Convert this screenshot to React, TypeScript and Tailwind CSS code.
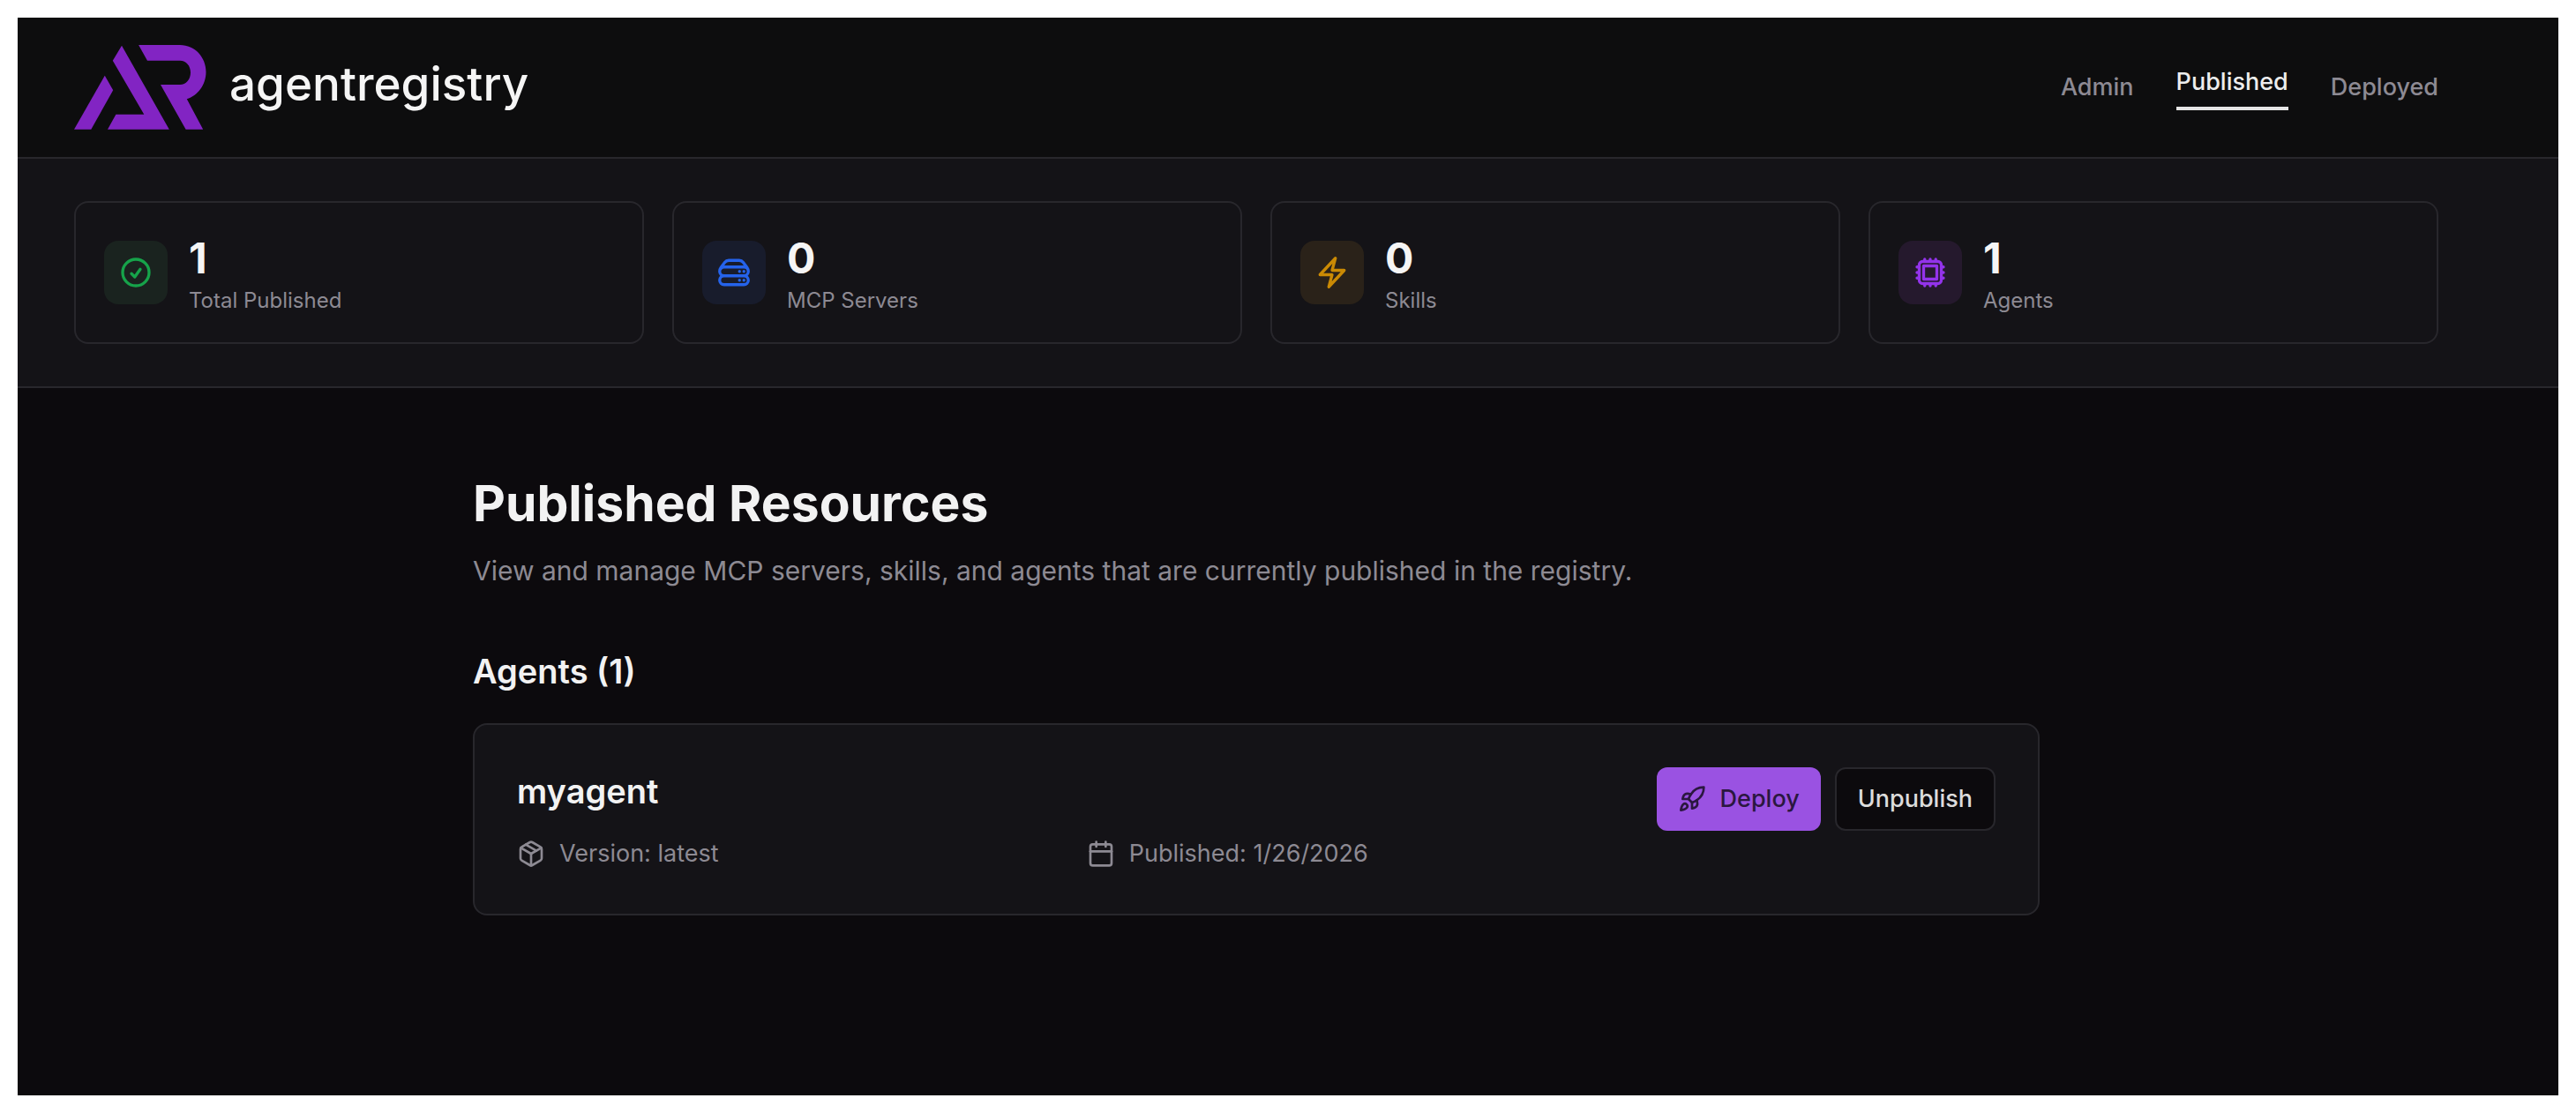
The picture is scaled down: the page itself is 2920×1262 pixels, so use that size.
import React from 'react';
import { Calendar, Package, Rocket } from 'lucide-react';
import {
    HiOutlineBolt,
    HiOutlineCheckCircle,
    HiOutlineCpuChip,
    HiOutlineServerStack,
} from 'react-icons/hi2';

const stats = [
    { label: 'Total Published', value: 1, icon: HiOutlineCheckCircle, style: 'bg-[#1a231f] text-[#16a34a]' },
    { label: 'MCP Servers', value: 0, icon: HiOutlineServerStack, style: 'bg-[#181c2c] text-[#2563eb]' },
    { label: 'Skills', value: 0, icon: HiOutlineBolt, style: 'bg-[#2a2219] text-[#ca8a04]' },
    { label: 'Agents', value: 1, icon: HiOutlineCpuChip, style: 'bg-[#25192d] text-[#9333ea]' },
];

const navItems = ['Admin', 'Published', 'Deployed'];

const agents = [{ name: 'myagent', version: 'latest', published: '1/26/2026' }];

const Logo: React.FC = () => (
    <svg width="150" height="96" viewBox="0 0 150 96" fill="#8224c3" aria-hidden="true">
        <path d="M34.8 34.7 44.2 51.3 19.3 95.7H0Z" />
        <path d="M54 .7 107.8 95.7H38L47.4 78.7H79.3L43.8 17.7Z" />
        <path d="M73.1 0H120C137 0 149.5 14 149.5 30.7C149.5 45 140 57.5 127.8 61.3L146.2 95.7H126.6L98 45H120C127 45 132 39 132 31.3C132 23.5 127 17.7 120 17.7H83Z" />
    </svg>
);

const Header: React.FC = () => (
    <header className="border-b-2 border-[#28272c] bg-[#0d0d0e]">
        <div className="mr-[72px] flex h-[158px] items-center justify-between px-16">
            <a href="#" className="flex items-center gap-[26px]">
                <Logo />
                <span className="pb-2 text-[53px] leading-[64px] font-medium text-[#f5f5f5]">agentregistry</span>
            </a>
            <nav className="flex items-center gap-12 text-[27px] leading-10 font-medium">
                {navItems.map((item) => (
                    <a
                        key={item}
                        href="#"
                        className={item === 'Published' ? 'border-b-4 border-[#e5e5e5] pb-2 text-[#ededed]' : 'text-[#8d8a93]'}
                    >
                        {item}
                    </a>
                ))}
            </nav>
        </div>
    </header>
);

const Stats: React.FC = () => (
    <section className="border-b-2 border-[#28272c] bg-[#141317]">
        <div className="mr-[72px] grid grid-cols-4 gap-8 px-16 py-12">
            {stats.map(({ label, value, icon: Icon, style }) => (
                <div key={label} className="flex items-center gap-6 rounded-2xl border-2 border-[#28272c] px-8 py-[31px]">
                    <div className={`flex size-[72px] items-center justify-center rounded-2xl ${style}`}>
                        <Icon size={40} strokeWidth={2} />
                    </div>
                    <div>
                        <p className="text-5xl leading-16 font-bold text-[#f5f5f5]">{value}</p>
                        <p className="text-2xl leading-8 text-[#8d8a93]">{label}</p>
                    </div>
                </div>
            ))}
        </div>
    </section>
);

const App: React.FC = () => {
    return (
        <div className="flex min-h-screen flex-col bg-white p-5 font-['Inter',sans-serif] antialiased">
            <div className="flex-1 bg-[#0c0a0d]">
                <Header />
                <Stats />
                <main className="mr-[72px] px-16 py-24">
                    <div className="mx-auto max-w-[1776px]">
                        <h1 className="text-[57px] leading-[70px] font-bold text-[#f2f2f2]">Published Resources</h1>
                        <p className="mt-4 text-[30px] leading-[50px] text-[#8d8a93]">
                            View and manage MCP servers, skills, and agents that are currently published in the registry.
                        </p>

                        <h2 className="mt-[62px] text-[38px] leading-[54px] font-semibold text-[#f2f2f2]">
                            Agents ({agents.length})
                        </h2>
                        {agents.map((agent) => (
                            <article
                                key={agent.name}
                                className="mt-8 flex items-start gap-8 rounded-2xl border-2 border-[#28272c] bg-[#141317] p-12"
                            >
                                <div className="flex-1">
                                    <h3 className="text-[38px] leading-[54px] font-semibold text-[#f2f2f2]">{agent.name}</h3>
                                    <div className="mt-6 grid grid-cols-2 gap-8 text-[27px] leading-10 text-[#8d8a93]">
                                        <div className="flex items-center gap-4">
                                            <Package size={32} />
                                            <span>Version: {agent.version}</span>
                                        </div>
                                        <div className="flex items-center gap-4">
                                            <Calendar size={32} />
                                            <span>Published: {agent.published}</span>
                                        </div>
                                    </div>
                                </div>
                                <div className="flex gap-4 text-[27px] leading-10 font-medium">
                                    <button className="flex h-[72px] items-center gap-4 rounded-xl bg-[#9a52e2] px-6 text-[#2b1740]">
                                        <Rocket size={32} />
                                        Deploy
                                    </button>
                                    <button className="h-[72px] rounded-xl border-2 border-[#28272c] bg-[#0c0a0d] px-6 text-[#dcdcdc]">
                                        Unpublish
                                    </button>
                                </div>
                            </article>
                        ))}
                    </div>
                </main>
            </div>
        </div>
    );
};

export default App;
